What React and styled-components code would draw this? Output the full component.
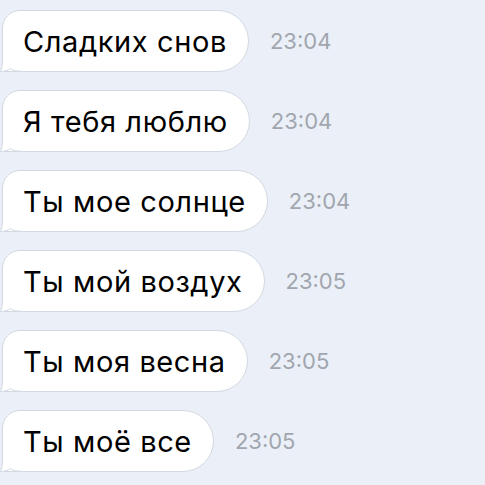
import React from 'react';
import styled, { createGlobalStyle } from 'styled-components';

const messages = [
  { text: 'Сладких снов', time: '23:04' },
  { text: 'Я тебя люблю', time: '23:04' },
  { text: 'Ты мое солнце', time: '23:04' },
  { text: 'Ты мой воздух', time: '23:05' },
  { text: 'Ты моя весна', time: '23:05' },
  { text: 'Ты моё все', time: '23:05' },
];

const Tail = () => (
  <TailSvg width='26' height='24' viewBox='0 0 26 24'>
    <path
      d='M2.5 0 L2.5 12 C2.5 17 1.6 20.5 0.5 23.5 C4 23.5 8 22.6 10.5 20.5 C13 22.6 17 23.5 26 23.5 L26 0 Z'
      fill='#ffffff'
    />
    <path
      d='M2.5 0 L2.5 12 C2.5 17 1.6 20.5 0.5 23.5 C4 23.5 8 22.6 10.5 20.5 C13 22.6 17 23.5 26 23.5'
      fill='none'
      stroke='#d3d9e1'
      strokeWidth='1'
    />
  </TailSvg>
);

const App = () => {
  return (
    <>
      <GlobalStyle />
      <Chat>
        {messages.map((m, i) => (
          <Row key={i}>
            <Bubble>
              <Tail />
              <Text>{m.text}</Text>
            </Bubble>
            <Time>{m.time}</Time>
          </Row>
        ))}
      </Chat>
    </>
  );
};

const GlobalStyle = createGlobalStyle`
  html, body {
    margin: 0;
    padding: 0;
    background: #ebf0f8;
  }
`;

const Chat = styled.div`
  display: flex;
  flex-direction: column;
  gap: 18px;
  padding: 10px 0 0 2px;
  font-family: Inter, 'Liberation Sans', sans-serif;
`;

const Row = styled.div`
  display: flex;
  align-items: center;
  gap: 21px;
`;

const Bubble = styled.div`
  position: relative;
  box-sizing: border-box;
  height: 62px;
  display: flex;
  align-items: center;
  padding: 0 21px 0 20px;
  background: #ffffff;
  border: 1px solid #d3d9e1;
  border-radius: 18px 31px 31px 0;
`;

const TailSvg = styled.svg`
  position: absolute;
  left: -3px;
  bottom: -1px;
  display: block;
`;

const Text = styled.span`
  position: relative;
  font-size: 29px;
  letter-spacing: 0.6px;
  color: #000000;
  white-space: nowrap;
`;

const Time = styled.span`
  font-size: 22px;
  color: #a1a6ae;
`;

export default App;
